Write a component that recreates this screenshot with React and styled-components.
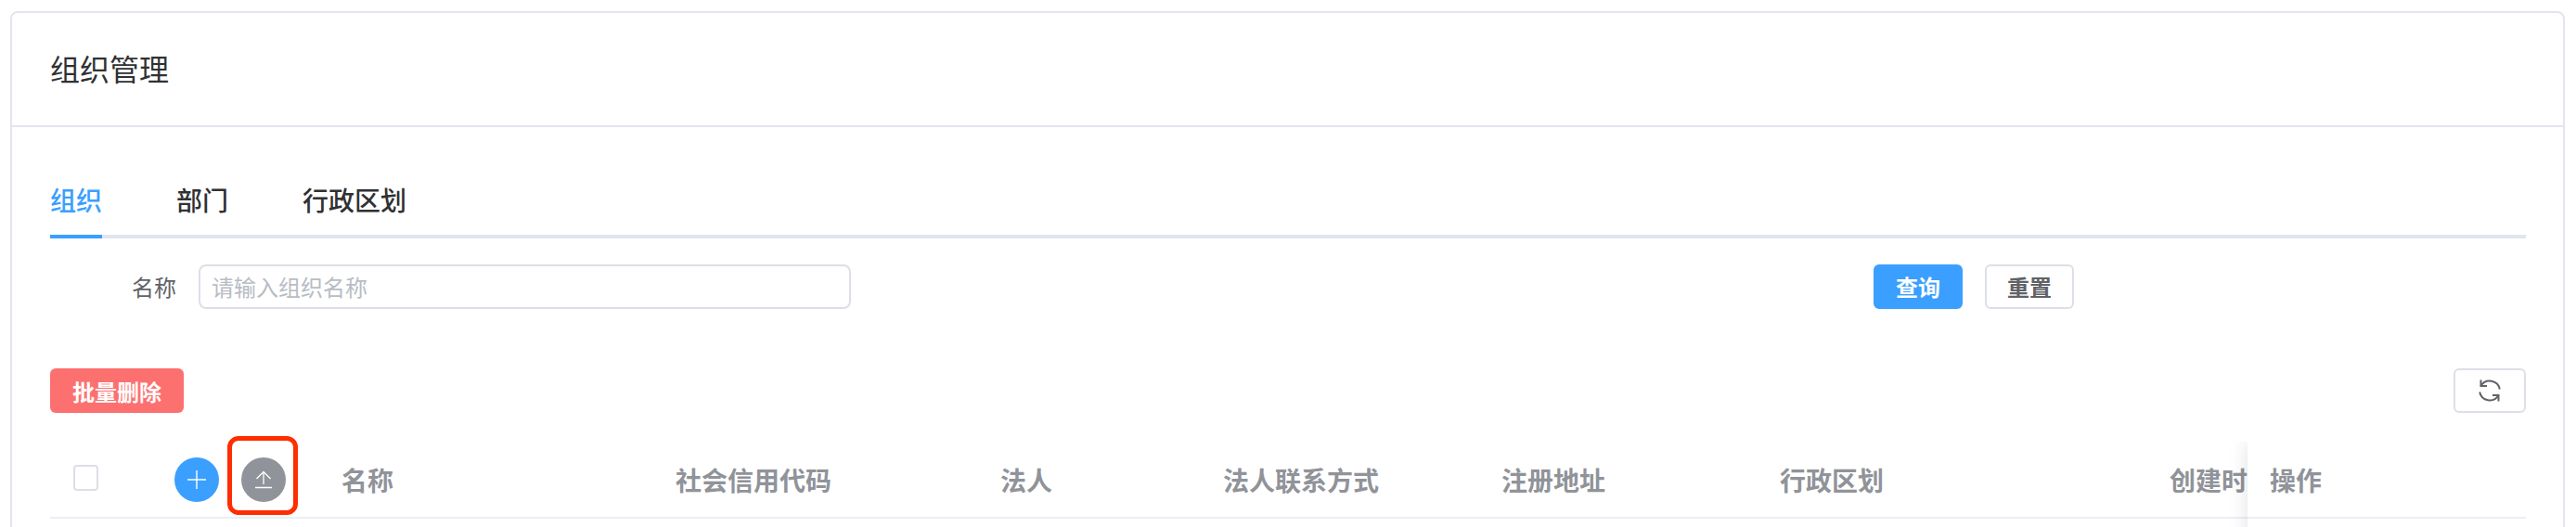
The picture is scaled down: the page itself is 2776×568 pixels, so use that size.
import React from 'react'
import styled, { createGlobalStyle } from 'styled-components'

const GlobalStyle = createGlobalStyle`
  html, body {
    margin: 0;
    padding: 0;
    height: 568px;
    overflow: hidden;
    background: #fff;
    font-family: "Noto Sans CJK SC", "Liberation Sans", sans-serif;
  }
`

const columns = [
  { name: '名称', width: 360 },
  { name: '社会信用代码', width: 350 },
  { name: '法人', width: 240 },
  { name: '法人联系方式', width: 300 },
  { name: '注册地址', width: 300 },
  { name: '行政区划', width: 420 },
  { name: '创建时间', width: 300 },
]

const App = () => {
  return (
    <Page>
      <GlobalStyle />
      <Card>
        <CardHeader>组织管理</CardHeader>
        <CardBody>
          <Tabs>
            <Tab $active>组织</Tab>
            <Tab>部门</Tab>
            <Tab>行政区划</Tab>
          </Tabs>
          <SearchBar>
            <Label>名称</Label>
            <Input placeholder="请输入组织名称" readOnly />
            <Button $primary>查询</Button>
            <Button>重置</Button>
          </SearchBar>
          <Toolbar>
            <DangerButton>批量删除</DangerButton>
            <RefreshButton aria-label="刷新">
              <svg width="28" height="28" viewBox="0 0 28 28" fill="none" stroke="#606266" strokeWidth="2">
                <path d="M4.500 9A11 11 0 0 1 24.800 12.500" />
                <path d="M4.500 2.500V9H11" />
                <path d="M23.500 19A11 11 0 0 1 3.200 15.500" />
                <path d="M23.500 25.500V19H17" />
              </svg>
            </RefreshButton>
          </Toolbar>
          <Table>
            <CheckCell><Checkbox /></CheckCell>
            <ActionCell>
              <RoundButton $color="#3a9fff">
                <svg width="24" height="24" viewBox="0 0 24 24" stroke="#fff" strokeWidth="1.4">
                  <path d="M12 2v20M2 12h20" />
                </svg>
              </RoundButton>
              <RoundButton $color="#909399">
                <svg width="24" height="24" viewBox="0 0 24 24" fill="none" stroke="#fff" strokeWidth="1.3">
                  <path d="M12 17V3.500M4.500 11 12 3.500l7.500 7.500M3 20.500h18" />
                </svg>
              </RoundButton>
              <Highlight />
            </ActionCell>
            <HeadRow>
              {columns.map((c) => (
                <HeadCell key={c.name} style={{ width: c.width }}>{c.name}</HeadCell>
              ))}
            </HeadRow>
            <FixedColumn>
              <FixedHead>操作</FixedHead>
            </FixedColumn>
          </Table>
        </CardBody>
      </Card>
    </Page>
  )
}

const Page = styled.div`
  padding: 12px 12px 0 11px;
  width: 2776px;
  box-sizing: border-box;
  height: 568px;
  overflow: hidden;
`

const Card = styled.div`
  border: 2px solid #e2e5ef;
  border-radius: 8px;
  background: #fff;
  height: 700px;
  box-sizing: border-box;
`

const CardHeader = styled.div`
  height: 123px;
  box-sizing: border-box;
  padding: 0 41px 3px;
  display: flex;
  align-items: center;
  font-size: 32px;
  color: #303133;
  border-bottom: 2px solid #e2e5ef;
`

const CardBody = styled.div`
  padding: 40px 40px 0 41px;
`

const Tabs = styled.div`
  display: flex;
  gap: 80px;
  height: 80px;
  box-sizing: border-box;
  border-bottom: 4px solid #e2e5ef;
`

const Tab = styled.div`
  height: 80px;
  box-sizing: border-box;
  line-height: 77px;
  font-size: 28px;
  font-weight: 500;
  color: ${(p) => (p.$active ? '#3a9fff' : '#303133')};
  border-bottom: 4px solid ${(p) => (p.$active ? '#3a9fff' : 'transparent')};
`

const SearchBar = styled.div`
  display: flex;
  align-items: center;
  margin-top: 28px;
  height: 48px;
`

const Label = styled.label`
  margin-left: 88px;
  width: 72px;
  padding-bottom: 2px;
  font-size: 24px;
  color: #606266;
`

const Input = styled.input`
  width: 703px;
  height: 48px;
  box-sizing: border-box;
  margin-right: 1102px;
  padding: 0 12px 2px;
  border: 2px solid #dcdfe6;
  border-radius: 8px;
  font: inherit;
  font-size: 24px;
  outline: none;
  &::placeholder { color: #b8bcc4; }
`

const Button = styled.button`
  width: 96px;
  height: 48px;
  margin-right: 24px;
  padding: 0 0 2px;
  font: inherit;
  font-size: 24px;
  font-weight: 600;
  border-radius: 6px;
  border: 2px solid ${(p) => (p.$primary ? '#3a9fff' : '#dcdfe6')};
  background: ${(p) => (p.$primary ? '#3a9fff' : '#fff')};
  color: ${(p) => (p.$primary ? '#fff' : '#606266')};
`

const Toolbar = styled.div`
  display: flex;
  justify-content: space-between;
  margin-top: 64px;
`

const DangerButton = styled.button`
  width: 144px;
  height: 48px;
  padding: 0;
  border: 0;
  border-radius: 6px;
  background: #fd7070;
  color: #fff;
  font: inherit;
  font-size: 24px;
  font-weight: 700;
`

const RefreshButton = styled.button`
  width: 78px;
  height: 48px;
  padding: 0;
  display: flex;
  align-items: center;
  justify-content: center;
  background: #fff;
  border: 2px solid #dcdfe6;
  border-radius: 6px;
`

const Table = styled.div`
  position: relative;
  display: flex;
  align-items: center;
  margin-top: 31px;
  height: 83px;
  box-sizing: border-box;
  padding-top: 1px;
  border-bottom: 2px solid #ebeef5;
`

const CheckCell = styled.div`
  width: 134px;
  flex: none;
  padding: 0 0 4px 25px;
  box-sizing: border-box;
`

const Checkbox = styled.span`
  display: block;
  width: 27px;
  height: 28px;
  box-sizing: border-box;
  border: 2px solid #dcdfe6;
  border-radius: 4px;
`

const ActionCell = styled.div`
  position: relative;
  width: 180px;
  flex: none;
  display: flex;
  gap: 24px;
`

const RoundButton = styled.div`
  width: 48px;
  height: 48px;
  border-radius: 50%;
  background: ${(p) => p.$color};
  display: flex;
  align-items: center;
  justify-content: center;
`

const Highlight = styled.div`
  position: absolute;
  left: 57px;
  top: -23px;
  width: 76px;
  height: 85px;
  box-sizing: border-box;
  border: 5px solid #ff2d00;
  border-radius: 12px;
`

const HeadRow = styled.div`
  display: flex;
  flex: none;
`

const HeadCell = styled.div`
  flex: none;
  font-size: 28px;
  font-weight: 700;
  color: #909399;
  white-space: nowrap;
`

const FixedColumn = styled.div`
  position: absolute;
  top: 0;
  right: 0;
  width: 300px;
  height: 120px;
  background: #fff;
  box-shadow: 0 0 20px rgba(0, 0, 0, 0.12);
  clip-path: inset(0 0 0 -30px);
`

const FixedHead = styled.div`
  height: 83px;
  box-sizing: border-box;
  padding: 1px 0 0 24px;
  display: flex;
  align-items: center;
  border-bottom: 2px solid #ebeef5;
  font-size: 28px;
  font-weight: 700;
  color: #909399;
`

export default App
